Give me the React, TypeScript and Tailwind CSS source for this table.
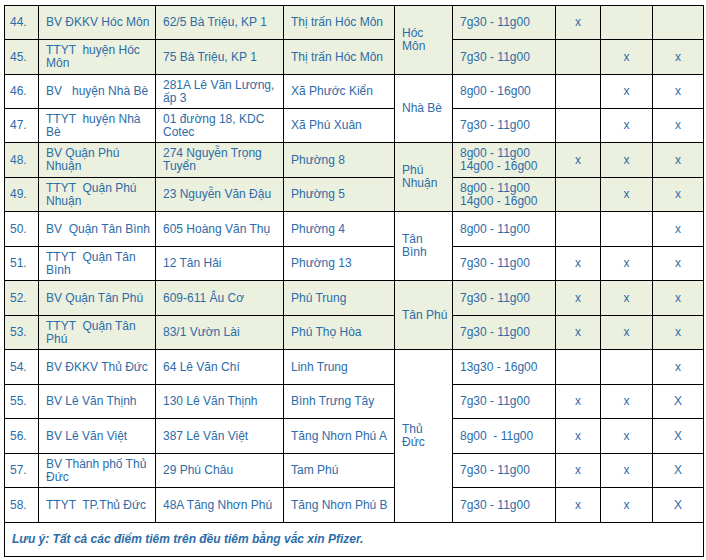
import React from "react";

type Row = {
  n: string;
  name: string;
  addr: string;
  ward: string;
  time: string;
  a: string;
  b: string;
  c: string;
  green: boolean;
  h: number;
  district?: { text: string; span: number };
};

const rows: Row[] = [
  { n: "44.", name: "BV ĐKKV Hóc Môn", addr: "62/5 Bà Triệu, KP 1", ward: "Thị trấn Hóc Môn", time: "7g30 - 11g00", a: "x", b: "", c: "", green: true, h: 34, district: { text: "Hóc\nMôn", span: 2 } },
  { n: "45.", name: "TTYT  huyện Hóc Môn", addr: "75 Bà Triệu, KP 1", ward: "Thị trấn Hóc Môn", time: "7g30 - 11g00", a: "", b: "x", c: "x", green: true, h: 35 },
  { n: "46.", name: "BV   huyện Nhà Bè", addr: "281A Lê Văn Lương, ấp 3", ward: "Xã Phước Kiển", time: "8g00 - 16g00", a: "", b: "x", c: "x", green: false, h: 34, district: { text: "Nhà Bè", span: 2 } },
  { n: "47.", name: "TTYT  huyện Nhà Bè", addr: "01 đường 18, KDC Cotec", ward: "Xã Phú Xuân", time: "7g30 - 11g00", a: "", b: "x", c: "x", green: false, h: 34 },
  { n: "48.", name: "BV Quận Phú Nhuận", addr: "274 Nguyễn Trọng Tuyển", ward: "Phường 8", time: "8g00 - 11g00\n14g00 - 16g00", a: "x", b: "x", c: "x", green: true, h: 35, district: { text: "Phú\nNhuận", span: 2 } },
  { n: "49.", name: "TTYT  Quận Phú Nhuận", addr: "23 Nguyễn Văn Đậu", ward: "Phường 5", time: "8g00 - 11g00\n14g00 - 16g00", a: "", b: "x", c: "x", green: true, h: 34 },
  { n: "50.", name: "BV  Quận Tân Bình", addr: "605 Hoàng Văn Thụ", ward: "Phường 4", time: "8g00 - 11g00", a: "", b: "", c: "x", green: false, h: 35, district: { text: "Tân\nBình", span: 2 } },
  { n: "51.", name: "TTYT  Quận Tân Bình", addr: "12 Tân Hải", ward: "Phường 13", time: "7g30 - 11g00", a: "x", b: "x", c: "x", green: false, h: 34 },
  { n: "52.", name: "BV Quận Tân Phú", addr: "609-611 Âu Cơ", ward: "Phú Trung", time: "7g30 - 11g00", a: "x", b: "x", c: "x", green: true, h: 35, district: { text: "Tân Phú", span: 2 } },
  { n: "53.", name: "TTYT  Quận Tân Phú", addr: "83/1 Vườn Lài", ward: "Phú Thọ Hòa", time: "7g30 - 11g00", a: "x", b: "x", c: "x", green: true, h: 34 },
  { n: "54.", name: "BV ĐKKV Thủ Đức", addr: "64 Lê Văn Chí", ward: "Linh Trung", time: "13g30 - 16g00", a: "", b: "", c: "x", green: false, h: 35, district: { text: "Thủ\nĐức", span: 5 } },
  { n: "55.", name: "BV Lê Văn Thịnh", addr: "130 Lê Văn Thịnh", ward: "Bình Trưng Tây", time: "7g30 - 11g00", a: "x", b: "x", c: "X", green: false, h: 34 },
  { n: "56.", name: "BV Lê Văn Việt", addr: "387 Lê Văn Việt", ward: "Tăng Nhơn Phú A", time: "8g00  - 11g00", a: "x", b: "x", c: "X", green: false, h: 35 },
  { n: "57.", name: "BV Thành phố Thủ Đức", addr: "29 Phú Châu", ward: "Tam Phú", time: "7g30 - 11g00", a: "x", b: "x", c: "X", green: false, h: 34 },
  { n: "58.", name: "TTYT  TP.Thủ Đức", addr: "48A Tăng Nhơn Phú", ward: "Tăng Nhơn Phú B", time: "7g30 - 11g00", a: "x", b: "x", c: "X", green: false, h: 35 },
];

const cell = "border border-black pl-[7px] pr-[1px] align-middle whitespace-pre-wrap";

export default function App() {
  return (
    <div className="w-[706px] h-[560px] bg-white pt-[5px] pl-[4px]" style={{ fontFamily: '"Liberation Sans", Arial, sans-serif' }}>
      <table className="table-fixed border-collapse w-[699px] text-[12px] leading-[13px] text-[#2c6ca8]">
        <colgroup>
          <col className="w-[34px]" />
          <col className="w-[117px]" />
          <col className="w-[128px]" />
          <col className="w-[111px]" />
          <col className="w-[58px]" />
          <col className="w-[103px]" />
          <col className="w-[45px]" />
          <col className="w-[52px]" />
          <col className="w-[51px]" />
        </colgroup>
        <tbody>
          {rows.map((r) => (
            <tr key={r.n} className={r.green ? "bg-[#ebf1de]" : "bg-white"} style={{ height: r.h }}>
              <td className="border border-black pl-[5px] pr-[1px] align-middle">{r.n}</td>
              <td className={cell}>{r.name}</td>
              <td className={cell}>{r.addr}</td>
              <td className={cell}>{r.ward}</td>
              {r.district && (
                <td rowSpan={r.district.span} className={cell}>
                  {r.district.text}
                </td>
              )}
              <td className={cell}>{r.time}</td>
              <td className="border border-black text-center align-middle">{r.a}</td>
              <td className="border border-black text-center align-middle">{r.b}</td>
              <td className="border border-black text-center align-middle">{r.c}</td>
            </tr>
          ))}
          <tr className="bg-white" style={{ height: 34 }}>
            <td colSpan={9} className="border border-black px-[7px] align-middle font-bold italic">
              Lưu ý: Tất cả các điểm tiêm trên đều tiêm bằng vắc xin Pfizer.
            </td>
          </tr>
        </tbody>
      </table>
    </div>
  );
}
